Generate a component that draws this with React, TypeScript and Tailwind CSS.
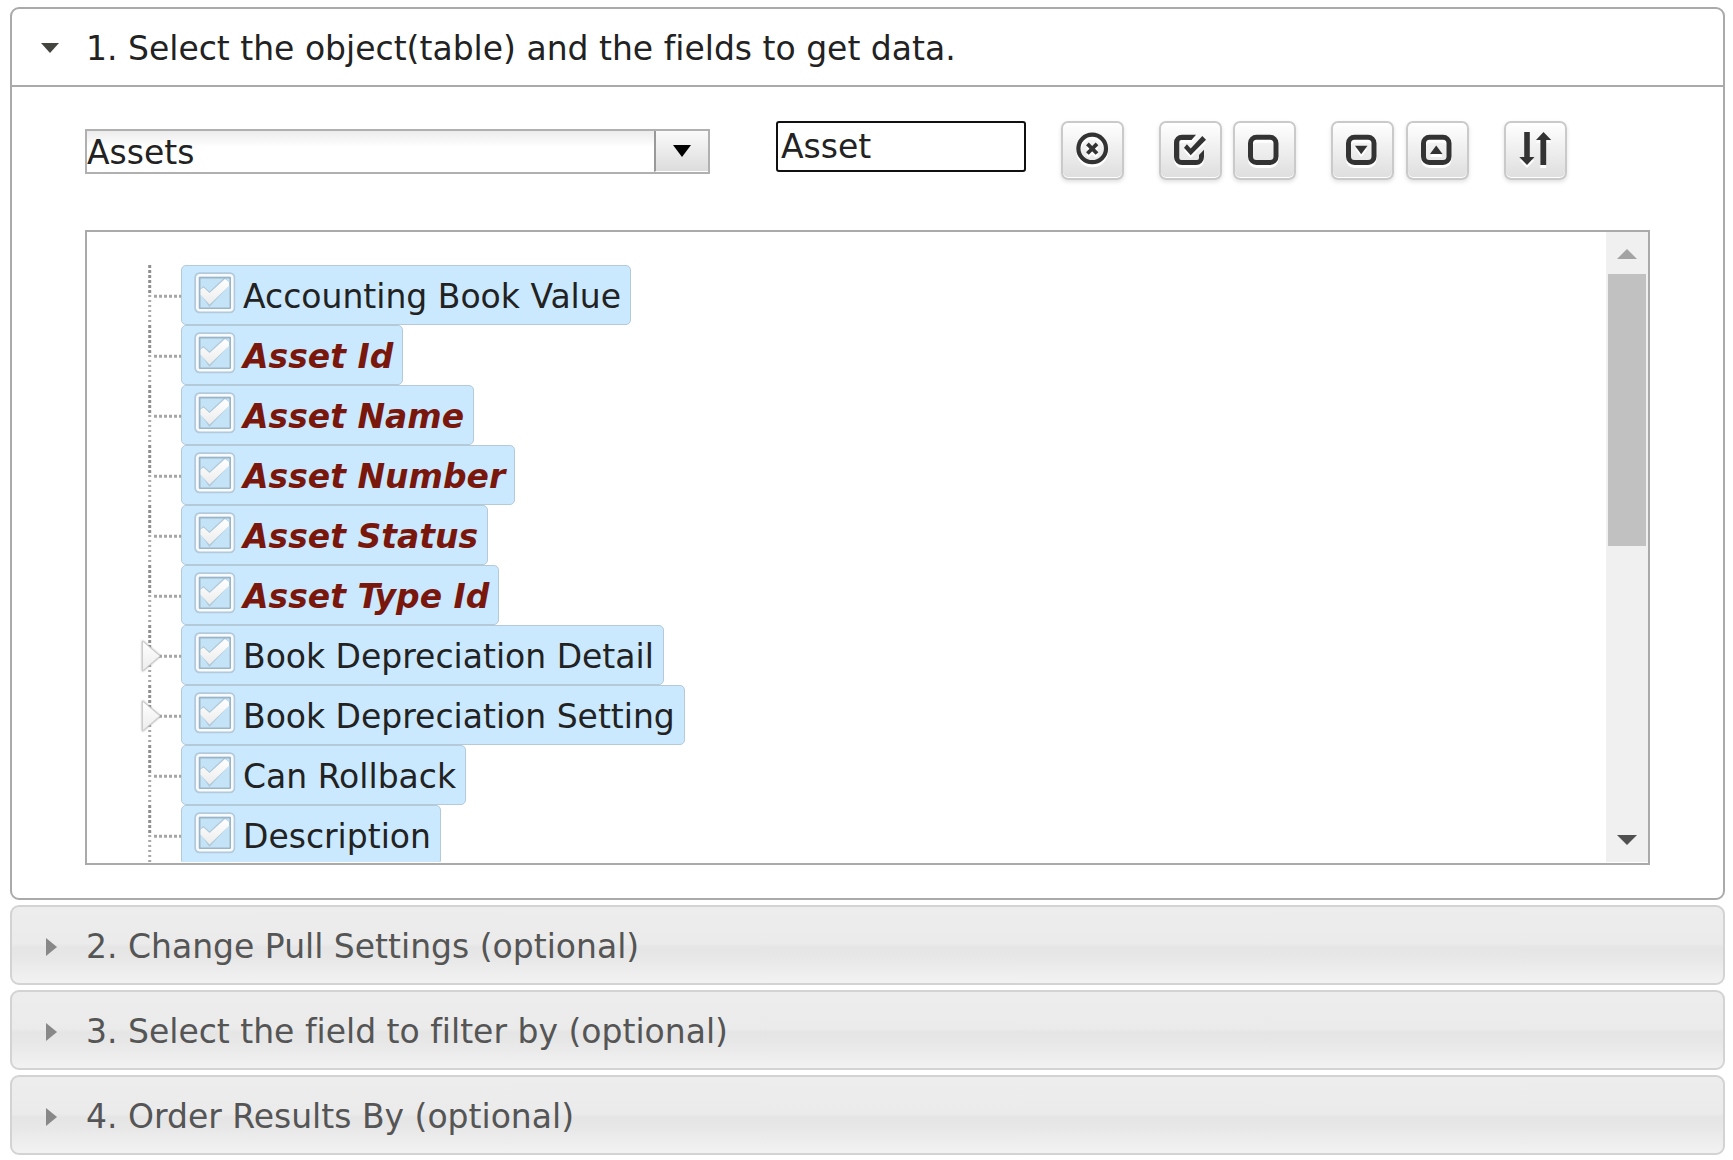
import { useState, type ReactNode } from "react";

type Field = { name: string; required?: boolean; branch?: boolean };

const FIELDS: Field[] = [
  { name: "Accounting Book Value" },
  { name: "Asset Id", required: true },
  { name: "Asset Name", required: true },
  { name: "Asset Number", required: true },
  { name: "Asset Status", required: true },
  { name: "Asset Type Id", required: true },
  { name: "Book Depreciation Detail", branch: true },
  { name: "Book Depreciation Setting", branch: true },
  { name: "Can Rollback" },
  { name: "Description" },
];

const SECTIONS = [
  "2. Change Pull Settings (optional)",
  "3. Select the field to filter by (optional)",
  "4. Order Results By (optional)",
];

function ToolButton({ label, children }: { label: string; children: ReactNode }) {
  return (
    <button
      type="button"
      aria-label={label}
      className="h-[59px] w-[63px] shrink-0 rounded-[7px] border-2 border-[#cacaca] bg-linear-to-b from-white to-[#dedede] shadow-[inset_0_-1px_0_#fff,0_2px_4px_rgba(0,0,0,0.12)]"
    >
      <svg viewBox="0 0 59 55" className="h-[55px] w-[59px] text-[#333] drop-shadow-[0_3px_0_#fff]" fill="currentColor" aria-hidden="true">
        {children}
      </svg>
    </button>
  );
}

function Square() {
  return <rect x="15.5" y="14.2" width="25.5" height="25.3" rx="6" fill="none" stroke="currentColor" strokeWidth="5" />;
}

function TreeNode({ field }: { field: Field }) {
  const [checked, setChecked] = useState(true);
  return (
    <li className="flex h-[60px]">
      <div className="relative w-[40px] shrink-0">
        <svg viewBox="0 0 40 60" className="h-[60px] w-[40px]" aria-hidden="true">
          <path d="M8.7 0V30" stroke="#8f8f8f" strokeWidth="3" strokeDasharray="3 2" />
          <path d="M8.7 30V60" stroke="#a8a8a8" strokeWidth="3" strokeDasharray="2 3" />
          <path d="M13 31.2H40" stroke="#a6a6a6" strokeWidth="3" strokeDasharray="3 2" />
        </svg>
        {field.branch && (
          <button type="button" aria-label={`Expand ${field.name}`} className="absolute top-0 left-0 h-[60px] w-5">
            <svg viewBox="0 0 20 60" className="h-[60px] w-5 drop-shadow-[0_0_1px_#999]" aria-hidden="true">
              <path d="M1.5 16V46L19 31Z" fill="url(#mark)" stroke="#ccc" strokeWidth="1" />
            </svg>
          </button>
        )}
      </div>
      <label className="flex h-[60px] items-start rounded-[5px] border border-[#b4cad9] bg-[#cbe9fe] pt-[6px] pr-[9px] pl-[12px]">
        <span className="mr-[7px] grid size-[42px] shrink-0">
          <input
            type="checkbox"
            checked={checked}
            onChange={(e) => setChecked(e.target.checked)}
            className="col-start-1 row-start-1 size-[42px] appearance-none"
          />
          <svg viewBox="0 0 42 42" className="pointer-events-none col-start-1 row-start-1 size-[42px]" aria-hidden="true">
            <rect x="1.5" y="1.5" width="38.5" height="38.5" rx="4" fill="none" stroke="#a9bfce" strokeWidth="2.5" opacity="0.75" />
            <rect x="5.5" y="5.5" width="31" height="31" fill="#c5e3f6" stroke="#9bb5c7" strokeWidth="2" />
            <rect x="3.3" y="3.3" width="35" height="35" rx="2.5" fill="none" stroke="#f8fafc" strokeWidth="2.6" />
            {checked && (
              <>
                <path d="M6.5 19L9.5 16L15.5 21.5L30.5 7.5L35 11.5L15.5 32.5Z" fill="none" stroke="#9fb8c8" strokeWidth="3" opacity="0.6" />
                <path d="M6.5 17.5L9.5 15.5L15.5 21L31 7L35 10V14L15.5 32.5L6.5 22.5Z" fill="url(#mark)" />
              </>
            )}
          </svg>
        </span>
        <span className={field.required ? "leading-[50px] font-bold text-[#7a170d] italic" : "leading-[50px]"}>{field.name}</span>
      </label>
    </li>
  );
}

export default function App() {
  const [query, setQuery] = useState("Asset");
  return (
    <main className="flex flex-col gap-[5px] bg-white pt-[7px] pr-2 pb-[5px] pl-[10px] font-['DejaVu_Sans',sans-serif] text-[33px] leading-[40px] text-[#222] [font-variant-ligatures:none]">
      <svg className="absolute size-0" aria-hidden="true">
        <defs>
          <linearGradient id="mark" x1="0" y1="0" x2="0" y2="1">
            <stop offset="0" stopColor="#fff" />
            <stop offset="1" stopColor="#ececec" />
          </linearGradient>
        </defs>
      </svg>

      <section className="rounded-[9px] border-2 border-[#aaa] bg-white">
        <h2>
          <button type="button" aria-expanded="true" className="flex h-[78px] w-full items-center border-b-2 border-[#aaa] pt-1 pl-[28px] text-left">
            <svg viewBox="0 0 20 12" className="mr-[26px] h-3 w-5" aria-hidden="true">
              <path d="M1 0H19L10 10Z" fill="#454540" />
            </svg>
            1. Select the object(table) and the fields to get data.
          </button>
        </h2>

        <div className="px-[73px] pt-[34px] pb-[33px]">
          <div className="flex items-start">
            <div className="relative mt-2 mr-[66px] w-[625px]">
              <select
                aria-label="Object"
                className="h-[45px] w-full appearance-none border-2 border-[#b0b0b0] bg-linear-to-b from-[#ececec] to-white to-40% pt-0.5 leading-[40px] outline-none"
              >
                <option>Assets</option>
              </select>
              <span className="pointer-events-none absolute inset-y-[2px] right-[2px] flex w-[54px] items-center justify-center border-b border-l-2 border-b-white border-l-[#999] bg-linear-to-b from-[#fafafa] to-[#dcdcdc]">
                <svg viewBox="0 0 18 12" className="h-3 w-[18px]" aria-hidden="true">
                  <path d="M0 0H18L9 12Z" />
                </svg>
              </span>
            </div>

            <input
              type="text"
              aria-label="Filter fields"
              value={query}
              onChange={(e) => setQuery(e.target.value)}
              className="mr-[35px] h-[51px] w-[250px] rounded-[3px] border-2 border-[#101010] px-[3px] outline-none"
            />

            <div className="flex gap-[35px]">
              <ToolButton label="Clear filter">
                <circle cx="29.2" cy="25.4" r="13.8" fill="none" stroke="currentColor" strokeWidth="4.2" />
                <path d="M24.4 20.9L34 30.5M34 20.9L24.4 30.5" stroke="currentColor" strokeWidth="3.8" />
              </ToolButton>
              <div className="flex gap-[11px]">
                <ToolButton label="Select all">
                  <path d="M35 11.7H21a8 8 0 0 0-8 8V34a8 8 0 0 0 8 8H35a8 8 0 0 0 8-8V26.7L38 32V35a2 2 0 0 1-2 2H20.3a2 2 0 0 1-2-2V19a2 2 0 0 1 2-2H30.5Z" />
                  <path d="M23 24.7L25.9 21.3L29.7 25.5L41.3 13L45 16.7L29.7 32.3Z" />
                </ToolButton>
                <ToolButton label="Deselect all">
                  <Square />
                </ToolButton>
              </div>
              <div className="flex gap-3">
                <ToolButton label="Expand all">
                  <Square />
                  <path d="M22 22.7H34.5L28.2 31.3Z" />
                </ToolButton>
                <ToolButton label="Collapse all">
                  <Square />
                  <path d="M22 31H34.5L28.2 22.5Z" />
                </ToolButton>
              </div>
              <ToolButton label="Sort">
                <path d="M18.2 9H23.8V34H28.5L21 42L13.3 34H18.2Z" />
                <path d="M37.5 9L45.2 17H40.2V42H34.4V17H30Z" />
              </ToolButton>
            </div>
          </div>

          <div className="mt-[50px] flex h-[635px] border-2 border-[#aaa] pb-px">
            <ul className="h-full min-w-0 flex-1 overflow-hidden pt-[33px] pl-[54px]">
              {FIELDS.map((field) => (
                <TreeNode key={field.name} field={field} />
              ))}
            </ul>
            <div className="flex w-[42px] flex-col bg-[#f0f0f0] px-[2px]">
              <button type="button" aria-label="Scroll up" className="flex h-[42px] shrink-0 items-center justify-center pt-0.5">
                <svg viewBox="0 0 20 10" className="h-[10px] w-5" aria-hidden="true">
                  <path d="M0 10L10 0L20 10Z" fill="#a3a3a3" />
                </svg>
              </button>
              <div className="h-[272px] bg-[#c1c1c1]" />
              <button type="button" aria-label="Scroll down" className="mt-auto flex h-[42px] shrink-0 items-center justify-center pb-0.5">
                <svg viewBox="0 0 20 10" className="h-[10px] w-5" aria-hidden="true">
                  <path d="M0 0H20L10 10Z" fill="#505050" />
                </svg>
              </button>
            </div>
          </div>
        </div>
      </section>

      {SECTIONS.map((title) => (
        <section key={title}>
          <h2>
            <button
              type="button"
              aria-expanded="false"
              className="flex h-20 w-full items-center rounded-[9px] border-2 border-[#d3d3d3] bg-[linear-gradient(#ededed_0%,#ebebeb_48%,#e5e5e5_53%,#e7e7e7_65%,#f2f2f2_100%)] pt-1 pl-[34px] text-left text-[#555]"
            >
              <svg viewBox="0 0 12 20" className="mr-[28px] h-5 w-3" aria-hidden="true">
                <path d="M0 1L11 10L0 19Z" fill="#888" />
              </svg>
              {title}
            </button>
          </h2>
        </section>
      ))}
    </main>
  );
}
